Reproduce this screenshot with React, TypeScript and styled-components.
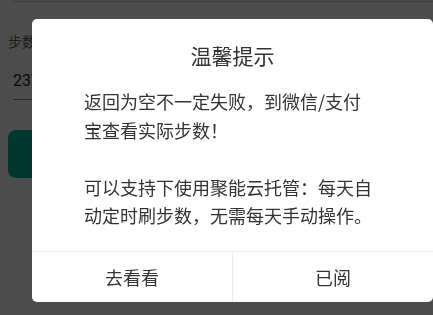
import React, { FC } from 'react';
import styled, { createGlobalStyle } from 'styled-components';

const GlobalStyle = createGlobalStyle`
  html, body {
    margin: 0;
    padding: 0;
    background: #fff;
    font-family: 'Noto Sans CJK SC', 'Noto Sans', sans-serif;
    overflow: hidden;
  }
`;

const Page = styled.div`
  width: 433px;
  height: 315px;
  background: #fff;
`;

const TopCard = styled.div`
  height: 1px;
  margin-left: 12px;
  border-bottom: 1px solid #d0d0d0;
`;

const Form = styled.div`
  padding: 0 0 0 8px;
`;

const Label = styled.div`
  margin-top: 29px;
  font-size: 14px;
  line-height: 20px;
  color: #5a5a5a;
`;

const InputRow = styled.div`
  margin: 18px 0 0 5px;
  padding-bottom: 6px;
  border-bottom: 1px solid #8c8c8c;
  font-family: 'Roboto', 'Noto Sans', sans-serif;
  font-size: 16px;
  line-height: 24px;
  color: #222;
`;

const PrimaryButton = styled.div`
  margin-top: 30px;
  margin-right: 8px;
  height: 48px;
  border-radius: 8px;
  background: #00bb9f;
`;

const Mask = styled.div`
  position: fixed;
  inset: 0;
  background: rgba(0, 0, 0, 0.7);
`;

const Dialog = styled.div`
  margin: 19px 0 0 32px;
  width: 401px;
  background: #fff;
  border-radius: 5px;
  overflow: hidden;
  color: #333;
`;

const Title = styled.div`
  padding-top: 21px;
  text-align: center;
  font-size: 21px;
  line-height: 30px;
`;

const Body = styled.div`
  margin-top: 17px;
  padding: 0 58px 21px 52px;
  font-size: 18px;
  line-height: 28.5px;
  white-space: pre-line;
`;

const Footer = styled.div`
  display: flex;
  border-top: 1px solid #ececec;
  height: 50px;
`;

const FooterButton = styled.div<{ $divider?: boolean }>`
  flex: 1;
  display: flex;
  align-items: center;
  justify-content: center;
  font-size: 18px;
  color: #333;
  border-left: ${p => (p.$divider ? '1px solid #ececec' : 'none')};
`;

const App: FC = () => {
  return (
    <>
      <GlobalStyle />
      <Page>
        <TopCard />
        <Form>
          <Label>步数</Label>
          <InputRow>23765</InputRow>
          <PrimaryButton />
        </Form>
      </Page>
      <Mask>
        <Dialog>
          <Title>温馨提示</Title>
          <Body>
            {'返回为空不一定失败，到微信/支付宝查看实际步数！\n\n可以支持下使用聚能云托管：每天自动定时刷步数，无需每天手动操作。'}
          </Body>
          <Footer>
            <FooterButton>去看看</FooterButton>
            <FooterButton $divider>已阅</FooterButton>
          </Footer>
        </Dialog>
      </Mask>
    </>
  );
};

export default App;
